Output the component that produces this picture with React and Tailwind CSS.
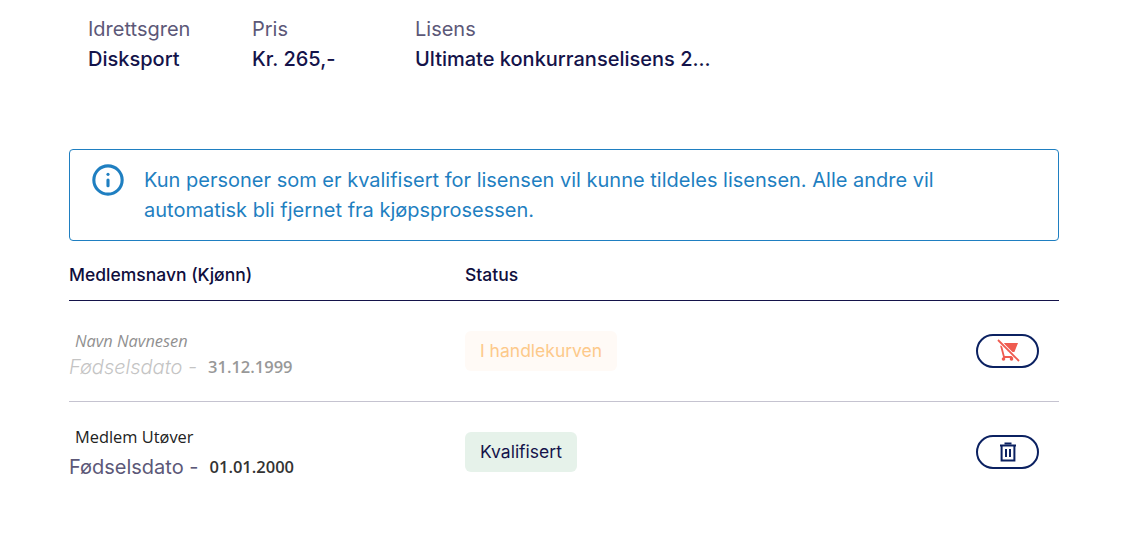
import { Info } from 'lucide-react';

const INTER = "font-['Inter',sans-serif]";
const OPEN = "font-['Open_Sans',sans-serif]";

const SUMMARY = [
  { label: 'Idrettsgren', value: 'Disksport', width: 'w-[164px]' },
  { label: 'Pris', value: 'Kr. 265,-', width: 'w-[163px]' },
  { label: 'Lisens', value: 'Ultimate konkurranselisens 2...', width: '' },
];

function CartOff() {
  return (
    <svg width="24" height="24" viewBox="0 0 24 24" fill="#ef5b50">
      <path d="M8 4h14l-3.6 9H11.5z" />
      <path d="M5 6.5 8 18h10.5" fill="none" stroke="#ef5b50" strokeWidth="1.8" />
      <circle cx="7.5" cy="20" r="1.8" />
      <circle cx="15.5" cy="20" r="1.8" />
      <path d="M2 1 23 22" stroke="#ffffff" strokeWidth="3.6" />
      <path d="M2 1 23 22" stroke="#ef5b50" strokeWidth="1.8" />
    </svg>
  );
}

function TrashIcon() {
  return (
    <svg width="20" height="22" viewBox="0 0 20 22" fill="none" stroke="#0b2161" strokeWidth="2">
      <path d="M2 4.5h16" />
      <path d="M6.5 2.5h7" strokeWidth="2" />
      <path d="M3.6 4.5v15h12.8v-15" />
      <path d="M8 8v8M12 8v8" />
    </svg>
  );
}

function Row({ name, date, status, faded, nameClass, dateClass, children }) {
  return (
    <div className="flex h-[100px] items-center">
      <div className={`h-full w-[396px] ${OPEN} ${nameClass} ${faded ? 'opacity-50' : ''}`}>
        <div className={`pl-[6px] text-[16.4px] leading-[20px] text-[#222222] ${faded ? 'italic font-medium' : ''}`}>{name}</div>
        <div className={`flex items-center leading-[26px] ${dateClass}`}>
          <span className={`${INTER} text-[20px] ${faded ? 'italic font-light text-[#8a8a8a]' : 'text-[#5c5878]'}`}>Fødselsdato -</span>
          <span className="ml-[11px] text-[16.5px] font-semibold text-[#333333]">{date}</span>
        </div>
      </div>
      {status}
      <div className="ml-auto mr-[20px]">{children}</div>
    </div>
  );
}

export default function App() {
  return (
    <div className={`min-h-screen bg-white pl-[69px] pr-[86px] pt-[14px] ${INTER}`}>
      <div className="flex pl-[19px] text-[20px] leading-[30px]">
        {SUMMARY.map(s => (
          <div key={s.label} className={s.width}>
            <div className="text-[#5c5878]">{s.label}</div>
            <div className="font-medium text-[#14134a]">{s.value}</div>
          </div>
        ))}
      </div>

      <div className="mt-[75px] flex h-[92px] rounded-[4px] border border-[#1f7fc1] pl-[21px] pt-[15px] text-[#1f7fc1]">
        <Info size={34} strokeWidth={2.2} className="mt-[-2px] shrink-0" />
        <p className="ml-[19px] w-[830px] text-[20px] leading-[30px]">
          Kun personer som er kvalifisert for lisensen vil kunne tildeles lisensen. Alle andre vil automatisk bli fjernet fra kjøpsprosessen.
        </p>
      </div>

      <div className="mt-[20px] flex h-[40px] items-start border-b border-[#14134a] text-[17.5px] font-medium leading-[28px] text-[#0f0e3d]">
        <div className="w-[396px]">Medlemsnavn (Kjønn)</div>
        <div>Status</div>
      </div>

      <div className="border-b border-[#c5c3d0]">
        <Row
          faded
          name="Navn Navnesen"
          date="31.12.1999"
          nameClass="pt-[30px]"
          dateClass="mt-[3px]"
          status={<span className="rounded-[6px] bg-[#fffaf6] px-[15px] py-[8px] text-[17.5px] leading-[24px] text-[#fdc98a]">I handlekurven</span>}
        >
          <button className="flex h-[34px] w-[63px] items-center justify-center rounded-full border-2 border-[#0b2161]">
            <CartOff />
          </button>
        </Row>
      </div>
      <Row
        name="Medlem Utøver"
        date="01.01.2000"
        nameClass="pt-[25px]"
        dateClass="mt-[7px]"
        status={<span className="rounded-[6px] bg-[#e6f2ea] px-[15px] py-[8px] text-[17.5px] leading-[24px] text-[#14134a]">Kvalifisert</span>}
      >
        <button className="flex h-[34px] w-[63px] items-center justify-center rounded-full border-2 border-[#0b2161]">
          <TrashIcon />
        </button>
      </Row>
    </div>
  );
}
